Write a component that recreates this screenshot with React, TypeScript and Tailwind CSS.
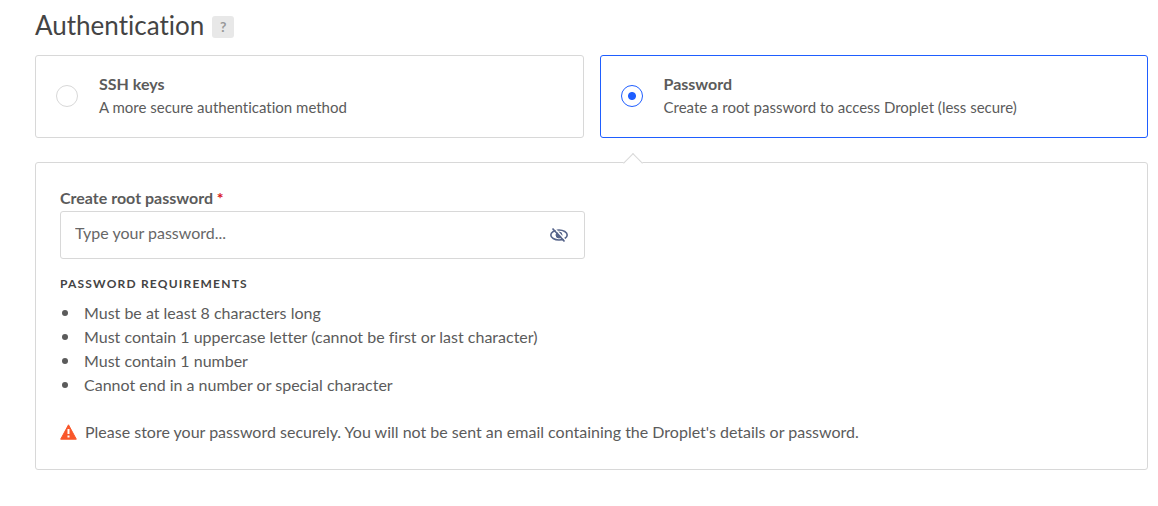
import { useState } from "react";

const methods = [
  {
    id: "ssh",
    title: "SSH keys",
    description: "A more secure authentication method",
  },
  {
    id: "password",
    title: "Password",
    description: "Create a root password to access Droplet (less secure)",
  },
];

const requirements = [
  "Must be at least 8 characters long",
  "Must contain 1 uppercase letter (cannot be first or last character)",
  "Must contain 1 number",
  "Cannot end in a number or special character",
];

function EyeOffIcon() {
  return (
    <svg width="20" height="16" viewBox="0 0 20 16" fill="none" stroke="#56648a">
      <ellipse cx="10" cy="8" rx="8.200" ry="5" strokeWidth="1.600" />
      <circle cx="10" cy="8" r="3" fill="#56648a" strokeWidth="1" />
      <path d="M9.500 6.200c1 0 1.800 0.800 1.800 1.800" stroke="#fff" strokeWidth="1" />
      <path d="M5 0.800l11.500 12.500" stroke="#fff" strokeWidth="1.400" />
      <path d="M3.500 1.500l12 13" strokeWidth="1.700" />
    </svg>
  );
}

function WarningIcon() {
  return (
    <svg className="shrink-0" width="17" height="16" viewBox="0 0 17 16">
      <path d="M8.500 0.800L16.300 15.200H0.700z" fill="#f9572b" stroke="#f9572b" strokeWidth="1" strokeLinejoin="round" />
      <path d="M8.500 5v5M8.500 11.500v2" stroke="#fff" strokeWidth="2" />
    </svg>
  );
}

export default function App() {
  const [method, setMethod] = useState("password");
  const [visible, setVisible] = useState(false);

  return (
    <div className="bg-white pt-[7px] pr-[10px] pb-9 pl-[35px] font-['Lato',sans-serif] text-[#5b5b5b] [font-variant-ligatures:none]">
      {/* Heading */}
      <div className="flex items-center gap-2">
        <h1 className="text-[26px] leading-9 text-[#444444]">Authentication</h1>
        <button
          type="button"
          className="mt-1 size-[22px] rounded-[3px] bg-[#e8e8e8] text-sm font-bold text-[#999999]"
        >
          ?
        </button>
      </div>

      {/* Method cards */}
      <div className="mt-3 grid grid-cols-2 gap-4">
        {methods.map((item) => (
          <label
            key={item.id}
            className="relative flex cursor-pointer items-center gap-[21px] rounded-[3px] border border-[#d8d8d8] px-5 pt-4 pb-[18px] has-checked:border-[#1f5eff]"
          >
            <input
              type="radio"
              name="method"
              value={item.id}
              checked={method === item.id}
              onChange={() => setMethod(item.id)}
              className="peer size-[22px] shrink-0 appearance-none rounded-full border border-[#d8d8d8] bg-white checked:border-[#1f5eff] checked:bg-[radial-gradient(circle,#1f5eff_3.5px,transparent_4.5px)]"
            />
            <span>
              <span className="block text-base leading-6 font-bold">{item.title}</span>
              <span className="block text-[15px] leading-[23px]">{item.description}</span>
            </span>
            {/* Pointer of the panel below */}
            <span className="absolute top-[100px] left-[25px] z-10 hidden size-[14px] rotate-45 border-t border-l border-[#d8d8d8] bg-white peer-checked:block" />
          </label>
        ))}
      </div>

      {/* Password panel */}
      <div className="mt-6 rounded-[3px] border border-[#d8d8d8] px-6 pt-[23px] pb-[25px]">
        <label htmlFor="password" className="block pb-px text-base leading-6 font-bold">
          Create root password <span className="text-[#d9161b]">*</span>
        </label>
        <div className="relative max-w-[525px]">
          <input
            id="password"
            type={visible ? "text" : "password"}
            placeholder="Type your password..."
            className="block h-12 w-full rounded-[3px] border border-[#d8d8d8] pr-12 pb-[6px] pl-[14px] text-base outline-none placeholder:text-[#676767]"
          />
          <button
            type="button"
            aria-label="Show password"
            onClick={() => setVisible(!visible)}
            className="absolute top-4 right-4"
          >
            <EyeOffIcon />
          </button>
        </div>

        <h2 className="mt-4 text-xs leading-[18px] font-bold tracking-widest text-[#444444] uppercase">
          Password requirements
        </h2>
        <ul className="mt-2 text-base leading-6">
          {requirements.map((text) => (
            <li
              key={text}
              className="flex items-center gap-4 pl-[2px] before:size-[6px] before:rounded-full before:bg-[#5b5b5b]"
            >
              {text}
            </li>
          ))}
        </ul>

        <p className="mt-[23px] flex items-center gap-2 text-base leading-6">
          <WarningIcon />
          Please store your password securely. You will not be sent an email containing the
          Droplet's details or password.
        </p>
      </div>
    </div>
  );
}
